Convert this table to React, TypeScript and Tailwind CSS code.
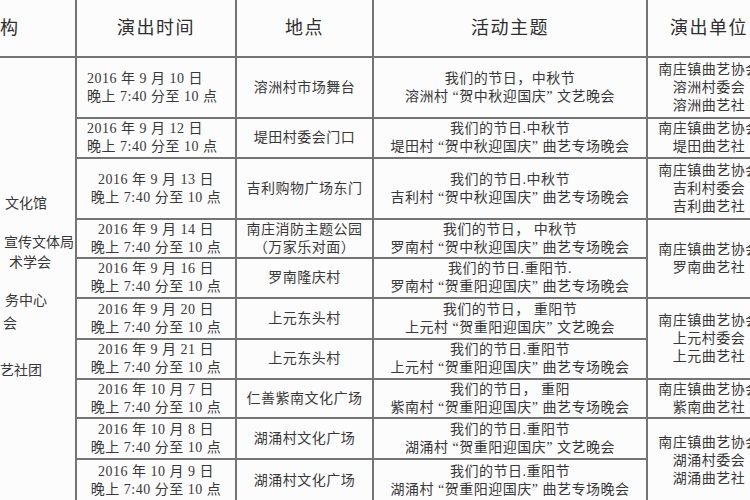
import React from "react";

type Row = {
  date: string;
  left?: boolean;
  place: string[];
  theme: string[];
  unit?: { span: number; lines: string[] };
  h: string;
};

const rows: Row[] = [
  {
    date: "2016 年 9 月 10 日",
    left: true,
    place: ["溶洲村市场舞台"],
    theme: ["我们的节日，中秋节", "溶洲村 “贺中秋迎国庆” 文艺晚会"],
    unit: { span: 1, lines: ["南庄镇曲艺协会", "溶洲村委会", "溶洲曲艺社"] },
    h: "h-[61px]",
  },
  {
    date: "2016 年 9 月 12 日",
    left: true,
    place: ["堤田村委会门口"],
    theme: ["我们的节日.中秋节", "堤田村 “贺中秋迎国庆” 曲艺专场晚会"],
    unit: { span: 1, lines: ["南庄镇曲艺协会", "堤田曲艺社"] },
    h: "h-[40px]",
  },
  {
    date: "2016 年 9 月 13 日",
    place: ["吉利购物广场东门"],
    theme: ["我们的节日.中秋节", "吉利村 “贺中秋迎国庆” 曲艺专场晚会"],
    unit: { span: 1, lines: ["南庄镇曲艺协会", "吉利村委会", "吉利曲艺社"] },
    h: "h-[61px]",
  },
  {
    date: "2016 年 9 月 14 日",
    place: ["南庄消防主题公园", "（万家乐对面）"],
    theme: ["我们的节日， 中秋节", "罗南村 “贺中秋迎国庆” 曲艺专场晚会"],
    unit: { span: 2, lines: ["南庄镇曲艺协会", "罗南曲艺社"] },
    h: "h-[39px]",
  },
  {
    date: "2016 年 9 月 16 日",
    place: ["罗南隆庆村"],
    theme: ["我们的节日.重阳节.", "罗南村 “贺重阳迎国庆” 曲艺专场晚会"],
    h: "h-[40px]",
  },
  {
    date: "2016 年 9 月 20 日",
    place: ["上元东头村"],
    theme: ["我们的节日， 重阳节", "上元村 “贺重阳迎国庆” 文艺晚会"],
    unit: { span: 2, lines: ["南庄镇曲艺协会", "上元村委会", "上元曲艺社"] },
    h: "h-[41px]",
  },
  {
    date: "2016 年 9 月 21 日",
    place: ["上元东头村"],
    theme: ["我们的节日.重阳节", "上元村 “贺重阳迎国庆” 曲艺专场晚会"],
    h: "h-[40px]",
  },
  {
    date: "2016 年 10 月 7 日",
    place: ["仁善紫南文化广场"],
    theme: ["我们的节日， 重阳", "紫南村 “贺重阳迎国庆” 曲艺专场晚会"],
    unit: { span: 1, lines: ["南庄镇曲艺协会", "紫南曲艺社"] },
    h: "h-[39px]",
  },
  {
    date: "2016 年 10 月 8 日",
    place: ["湖涌村文化广场"],
    theme: ["我们的节日.重阳节", "湖涌村 “贺重阳迎国庆” 文艺晚会"],
    unit: { span: 2, lines: ["南庄镇曲艺协会", "湖涌村委会", "湖涌曲艺社"] },
    h: "h-[41px]",
  },
  {
    date: "2016 年 10 月 9 日",
    place: ["湖涌村文化广场"],
    theme: ["我们的节日.重阳节", "湖涌村 “贺重阳迎国庆” 曲艺专场晚会"],
    h: "h-[44px]",
  },
];

const cell = "border-2 border-[#747474] p-0 align-middle overflow-hidden";
const line = "h-[18px] leading-[18px] overflow-hidden";

export default function App() {
  return (
    <div
      className="w-[750px] h-[500px] overflow-hidden bg-[#fcfcfc] text-[#383838]"
      style={{ fontFamily: '"Liberation Serif", "Noto Sans CJK SC", serif' }}
    >
      <table className="table-fixed border-collapse w-[771px]">
        <colgroup>
          <col className="w-[76px]" />
          <col className="w-[160px]" />
          <col className="w-[137px]" />
          <col className="w-[274px]" />
          <col className="w-[124px]" />
        </colgroup>
        <thead>
          <tr className="h-[57px]">
            <th className={`${cell} border-t-0 border-l-0 text-left font-normal text-[18px] text-[#2e2e2e]`}>
              构
            </th>
            <th className={`${cell} border-t-0 text-center font-normal text-[18px] tracking-[1.5px] text-[#2e2e2e]`}>
              演出时间
            </th>
            <th className={`${cell} border-t-0 text-center font-normal text-[18px] tracking-[1.5px] text-[#2e2e2e]`}>
              地点
            </th>
            <th className={`${cell} border-t-0 text-center font-normal text-[18px] tracking-[1.5px] text-[#2e2e2e]`}>
              活动主题
            </th>
            <th className={`${cell} border-t-0 text-center font-normal text-[18px] tracking-[1.5px] text-[#2e2e2e]`}>
              <div className="whitespace-nowrap">演出单位</div>
            </th>
          </tr>
        </thead>
        <tbody className="text-[14px] tracking-[0.5px]">
          {rows.map((r, i) => (
            <tr key={i} className={r.h}>
              {i === 0 && (
                <td rowSpan={10} className={`${cell} border-l-0 border-b-0 align-top`}>
                  <div className="flex flex-col tracking-normal whitespace-nowrap pt-[136px]">
                    <div className="pl-[5px] h-[20px] leading-[20px]">文化馆</div>
                    <div className="pl-[4px] mt-[19px] h-[20px] leading-[20px]">宣传文体局</div>
                    <div className="pl-[9px] h-[20px] leading-[20px]">术学会</div>
                    <div className="pl-[5px] mt-[18px] h-[20px] leading-[20px]">务中心</div>
                    <div className="pl-[3px] mt-[3px] h-[20px] leading-[20px]">会</div>
                    <div className="pl-0 mt-[27px] h-[20px] leading-[20px]">艺社团</div>
                  </div>
                </td>
              )}
              <td className={`${cell} ${r.left ? "text-left pl-[10px]" : "text-center"} whitespace-nowrap`}>
                <div className={line}>{r.date}</div>
                <div className={line}>晚上 7:40 分至 10 点</div>
              </td>
              <td className={`${cell} text-center whitespace-nowrap`}>
                {r.place.map((p, k) => (
                  <div key={k} className={line}>
                    {p}
                  </div>
                ))}
              </td>
              <td className={`${cell} text-center whitespace-nowrap`}>
                {r.theme.map((t, k) => (
                  <div key={k} className={line}>
                    {t}
                  </div>
                ))}
              </td>
              {r.unit && (
                <td rowSpan={r.unit.span} className={`${cell} text-center whitespace-nowrap`}>
                  {r.unit.lines.map((u, k) => (
                    <div key={k} className="h-[18px] leading-[18px] overflow-hidden">
                      {u}
                    </div>
                  ))}
                </td>
              )}
            </tr>
          ))}
        </tbody>
      </table>
    </div>
  );
}
